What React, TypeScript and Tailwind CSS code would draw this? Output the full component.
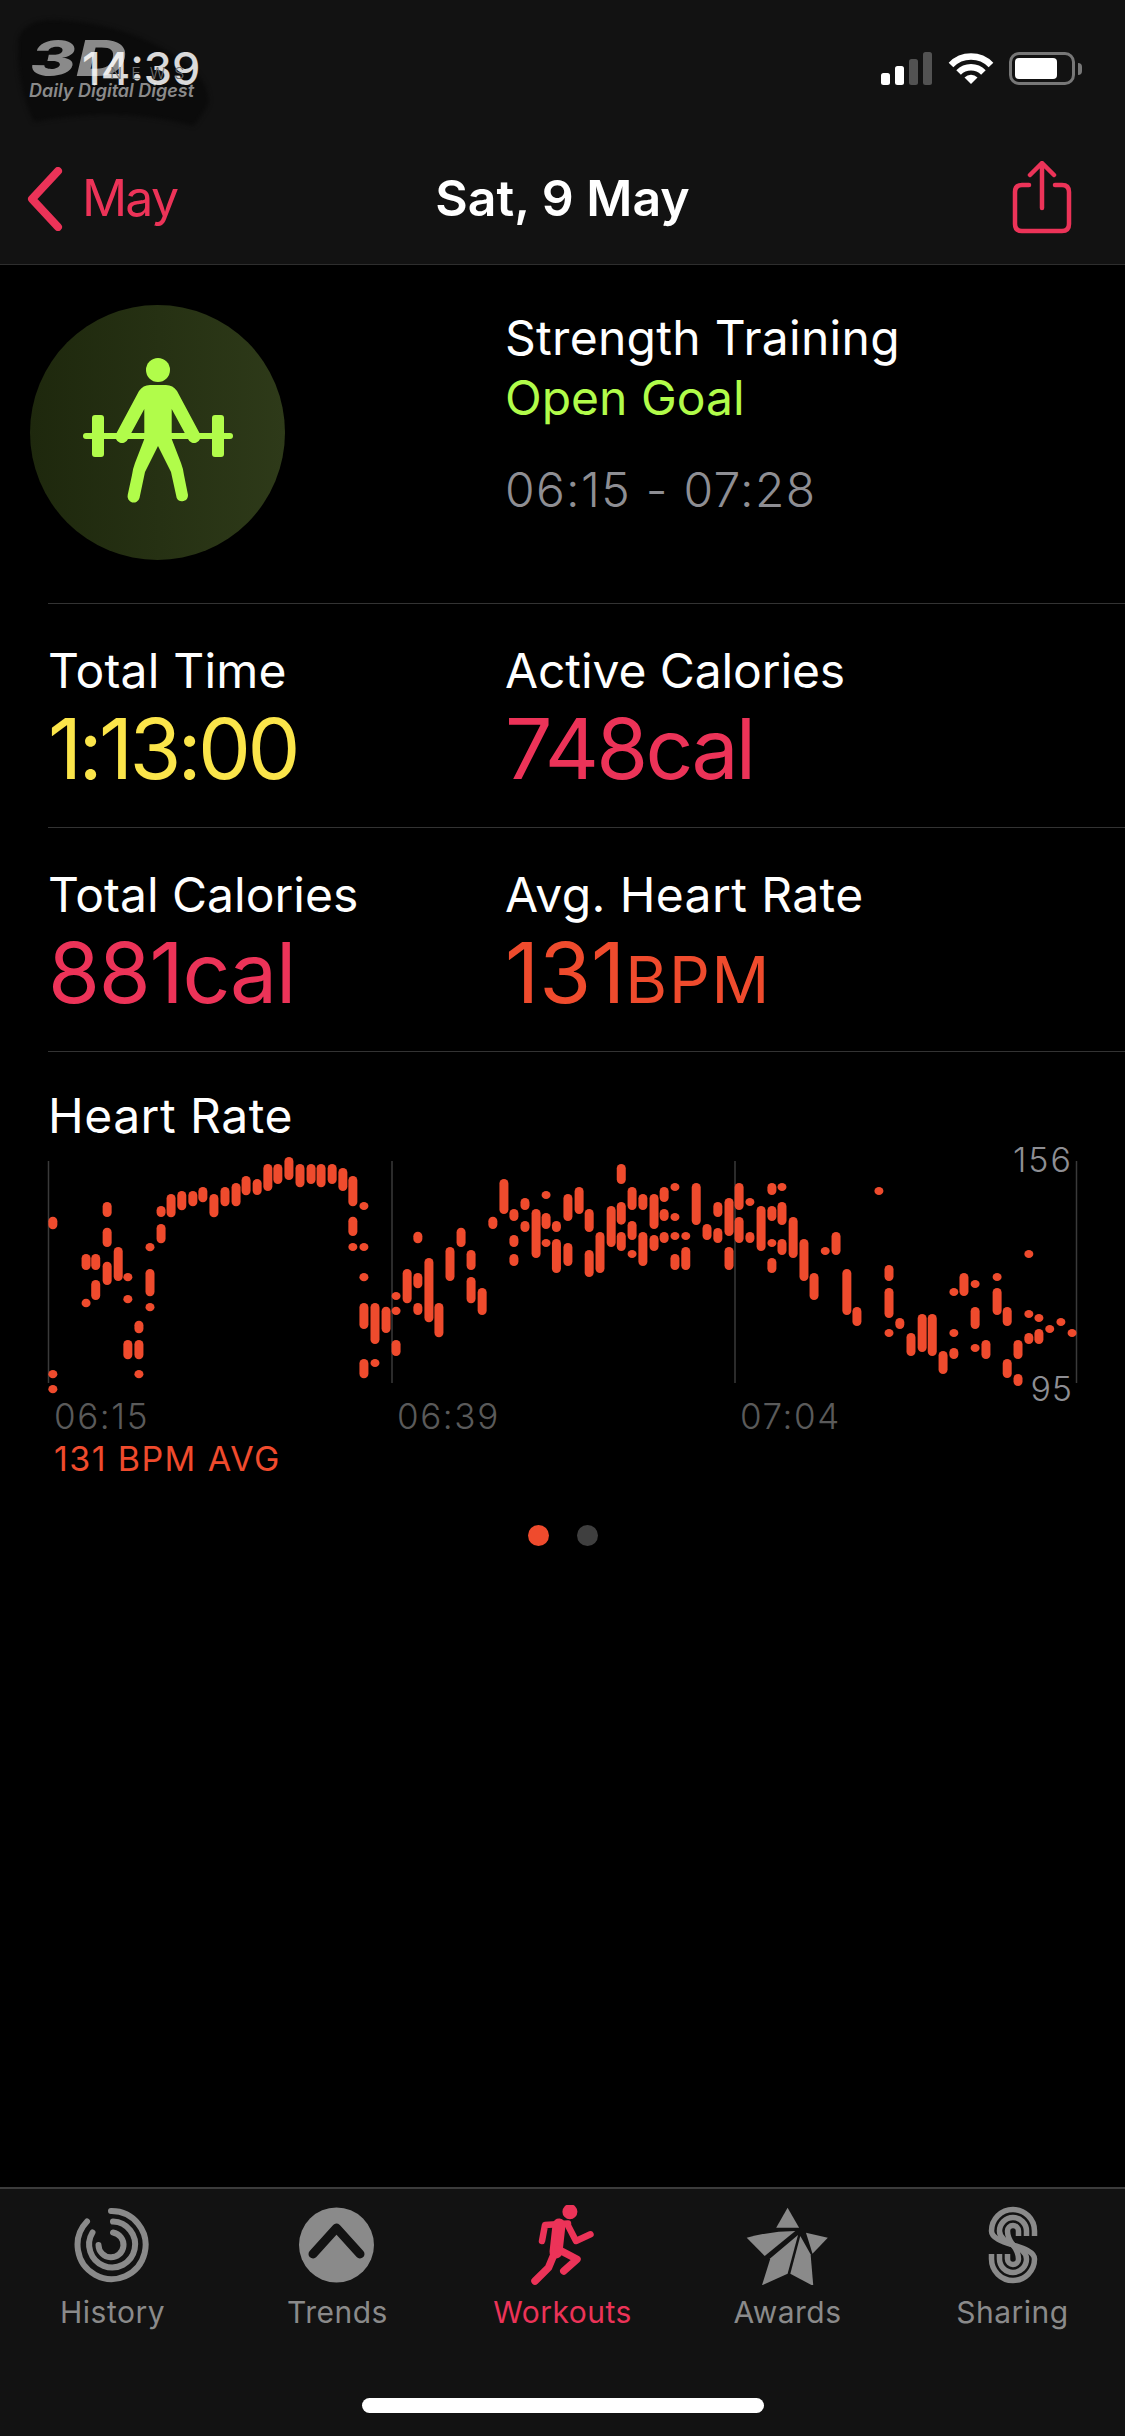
import type { ReactNode } from 'react';

const FONT = "font-['Inter','Liberation_Sans',sans-serif]";

// heart rate samples as [x, top, bottom], read off the two crops of the chart
const LEFT_BARS: number[][] = [
  [148, 410, 448], [148, 870, 895], [148, 915, 940], [241, 522, 570], [241, 656, 682], [268, 522, 570],
  [268, 600, 660], [300, 366, 411], [300, 443, 501], [300, 545, 615], [331, 501, 603], [358, 579, 604],
  [358, 645, 670], [358, 780, 838], [389, 722, 760], [389, 780, 838], [389, 870, 895], [420, 489, 514],
  [420, 567, 649], [420, 669, 694], [451, 378, 411], [451, 432, 490], [479, 342, 412], [509, 333, 391],
  [540, 333, 379], [568, 321, 367], [599, 342, 412], [630, 321, 379], [661, 309, 379], [689, 288, 346],
  [720, 297, 345], [750, 252, 333], [778, 252, 312], [809, 231, 300], [840, 252, 322], [871, 252, 312],
  [899, 252, 322], [930, 252, 312], [960, 264, 333], [988, 288, 379], [1019, 366, 390], [988, 410, 468],
  [988, 489, 513], [1019, 489, 513], [1019, 579, 604], [1019, 669, 747], [1050, 669, 792], [1081, 680, 759],
  [1019, 837, 895], [1050, 837, 861], [1109, 636, 660], [1109, 680, 705], [1109, 780, 828], [1140, 567, 670],
  [1170, 455, 490], [1170, 579, 625], [1170, 669, 705], [1201, 534, 727], [1229, 669, 772], [1260, 501, 603],
  [1291, 443, 501], [1319, 510, 570], [1319, 591, 670], [1350, 624, 705], [1380, 410, 447], [1411, 297, 402],
  [1439, 387, 423], [1439, 465, 501], [1439, 522, 558], [1470, 354, 390], [1470, 423, 456], [1501, 387, 534],
  [1529, 333, 357], [1529, 399, 447], [1529, 477, 501], [1558, 423, 456], [1558, 477, 579],
];

const RIGHT_BARS: number[][] = [
  [22, 342, 423], [22, 489, 558], [53, 321, 402], [81, 387, 456], [81, 510, 591], [111, 456, 579],
  [142, 378, 501], [170, 252, 312], [170, 366, 434], [170, 456, 513], [200, 321, 390], [200, 423, 480],
  [200, 510, 534], [230, 342, 390], [230, 456, 558], [261, 342, 447], [261, 465, 513], [289, 321, 366],
  [289, 387, 423], [289, 456, 489], [319, 309, 333], [319, 399, 423], [319, 456, 480], [319, 522, 570],
  [349, 456, 480], [349, 501, 570], [378, 309, 435], [408, 432, 480], [438, 366, 411], [438, 444, 489],
  [469, 354, 468], [469, 501, 570], [497, 309, 390], [497, 411, 489], [527, 354, 378], [527, 456, 489],
  [558, 378, 513], [588, 309, 345], [588, 378, 423], [588, 477, 501], [588, 534, 579], [616, 309, 333],
  [616, 366, 435], [616, 477, 525], [647, 411, 534], [677, 477, 603], [705, 579, 660], [736, 501, 525],
  [766, 456, 525], [796, 567, 705], [824, 681, 738], [885, 321, 345], [913, 555, 603], [913, 624, 714],
  [913, 747, 771], [943, 714, 747], [974, 759, 828], [1005, 702, 816], [1033, 702, 828], [1063, 813, 882],
  [1093, 624, 648], [1093, 747, 771], [1093, 804, 837], [1121, 579, 648], [1152, 600, 624], [1152, 681, 747],
  [1152, 792, 816], [1182, 780, 837], [1213, 579, 603], [1213, 624, 705], [1241, 681, 738], [1241, 837, 894],
  [1271, 780, 837], [1271, 882, 918], [1301, 510, 534], [1301, 690, 714], [1301, 759, 792], [1329, 702, 726],
  [1329, 747, 792], [1359, 735, 759], [1390, 714, 738], [1421, 747, 771],
];

const CHART_BARS = [
  ...LEFT_BARS.map(([x, a, b]) => [x / 2.8, 1080 + a / 3, 1080 + b / 3]),
  ...RIGHT_BARS.map(([x, a, b]) => [560 + x / 2.775, 1080 + a / 3, 1080 + b / 3]),
];

function StatusIcons() {
  return (
    <div className="relative z-10 flex items-start gap-[15px] pt-[52px] pr-[43px]">
      <svg width="52" height="33" viewBox="0 0 52 33">
        <rect x="0" y="21" width="9" height="12" rx="2.5" fill="#fff" />
        <rect x="14" y="14" width="9" height="19" rx="2.5" fill="#fff" />
        <rect x="28" y="7" width="9" height="26" rx="2.5" fill="#525252" />
        <rect x="42" y="0" width="9" height="33" rx="2.5" fill="#525252" />
      </svg>
      <svg width="46" height="33" viewBox="0 0 46 33" fill="none" stroke="#fff" strokeWidth="6.5">
        <path d="M3 13A28 28 0 0 1 43 13" />
        <path d="M10.6 20.5A17.5 17.5 0 0 1 35.4 20.5" />
        <path d="M23 32L16.5 25.5A9.2 9.2 0 0 1 29.5 25.5Z" fill="#fff" stroke="none" />
      </svg>
      <div className="flex items-center">
        <div className="w-[66px] h-[33px] rounded-[10px] border-[3px] border-[#777] p-[3px]">
          <div className="w-[42px] h-full rounded-[4px] bg-white" />
        </div>
        <div className="ml-[3px] w-[4px] h-[12px] rounded-r-full bg-[#777]" />
      </div>
    </div>
  );
}

// 3D News stamp: brush and big letters go under the clock, NEWS over it
function Watermark() {
  return (
    <>
      <div className="absolute left-0 top-0 w-[230px] h-[140px] pointer-events-none">
        <svg className="absolute left-0 top-0 blur-[2px]" width="230" height="140" viewBox="0 0 230 140">
          <path d="M18 40Q24 18 60 20Q130 24 185 62Q212 85 208 105L194 126Q120 105 34 122Q16 85 18 40Z" fill="#0b0b0b" />
        </svg>
        <div className="absolute left-[30px] top-[28px] text-[50px] leading-[60px] font-extrabold italic text-[#8a8a8a] origin-left scale-x-[1.4]">
          3D
        </div>
        <div className="absolute left-[29px] top-[81px] text-[18px] leading-[20px] font-semibold italic text-[#8a8a8a] whitespace-nowrap">
          Daily Digital Digest
        </div>
      </div>
      <div className="absolute z-20 left-[110px] top-[64px] text-[16px] leading-[18px] font-light tracking-[9px] text-[#6e6e6e] pointer-events-none">
        NEWS
      </div>
    </>
  );
}

function Lifter() {
  return (
    <svg width="255" height="255" viewBox="0 0 255 255" fill="#b1fc4a">
      <circle cx="128" cy="65" r="12" />
      <path d="M120 80H136Q143 80 147 86L170 129A6.500 6.500 0 0 1 158 134L141.700 104V134H114.300V104L98 134A6.500 6.500 0 0 1 86 129L109 86Q113 80 120 80Z" />
      <path d="M114.300 134H141.700L151 158Q153 163 154 170L158 190A6 6 0 0 1 146.700 193L141 167L128 141L115 167L109.500 193A6 6 0 0 1 97.700 190L102 170Q103 163 105 158Z" />
      <rect x="53" y="128" width="150" height="6" rx="3" />
      <rect x="62" y="110" width="12" height="42" rx="3" />
      <rect x="182" y="110" width="12" height="42" rx="3" />
    </svg>
  );
}

function HistoryIcon() {
  return (
    <svg width="90" height="80" viewBox="0 0 90 80" fill="none" stroke="#8a8a8a" strokeWidth="6" strokeLinecap="round">
      <path d="M43 6A34 34 0 1 1 19 16.500" />
      <path d="M45 16.500A23 23 0 1 1 24.500 27.500" />
      <path d="M45 27.500A12.500 12.500 0 1 1 30.500 40" />
    </svg>
  );
}

function TrendsIcon() {
  return (
    <svg width="90" height="80" viewBox="0 0 90 80">
      <circle cx="43.500" cy="40" r="37.500" fill="#8a8a8a" />
      <path d="M20 49L43.500 23L67 49" fill="none" stroke="#121212" strokeWidth="9" strokeLinecap="round" strokeLinejoin="round" />
    </svg>
  );
}

function RunnerIcon() {
  return (
    <svg width="90" height="80" viewBox="0 0 90 80" fill="none" stroke="#ec3358" strokeLinecap="round" strokeLinejoin="round">
      <circle cx="51.900" cy="6.700" r="7.500" fill="#ec3358" stroke="none" />
      <path d="M50 18.500L27 20L24 36" strokeWidth="6.500" />
      <path d="M49.500 19.500L58 36L72.500 29.300" strokeWidth="6.500" />
      <path d="M41 20L38 47" strokeWidth="13" />
      <path d="M40 44.300L59 54.300L45.800 66" strokeWidth="7.500" />
      <path d="M36 49.300L30.500 62.700L17 76" strokeWidth="7.500" />
    </svg>
  );
}

function AwardsIcon() {
  return (
    <svg width="90" height="80" viewBox="0 0 90 80" fill="#8a8a8a">
      <path d="M44.600 2.700L33.200 22.700H56.100Z" />
      <path d="M3.700 32.700Q28 26 52.300 26L21.700 51Z" />
      <path d="M55 30L27.400 53.300L19 80.300L44.600 68.700Z" />
      <path d="M57.300 31L47.300 68.700L70.300 81L67.600 49.300Z" />
      <path d="M63 27.700L84.800 32.700L69.500 48.700Z" />
    </svg>
  );
}

function SharingIcon() {
  const radii = [21.5, 13.5, 5.5];
  return (
    <svg width="90" height="80" viewBox="-45 -40 90 80" fill="none" stroke="#8a8a8a" strokeWidth="5.5">
      {radii.map((r) => (
        <path
          key={r}
          d={`M${r} -9V-14A${r} ${r} 0 0 0 ${-r} -14C${-r} 0 ${r} 0 ${r} 14A${r} ${r} 0 0 1 ${-r} 14V9`}
        />
      ))}
    </svg>
  );
}

function Stat({ label, labelClass, children }: { label: string; labelClass: string; children: ReactNode }) {
  return (
    <div>
      <div className={`text-[48px] leading-[60px] text-white ${labelClass}`}>{label}</div>
      <div className="mt-[3px] text-[84px] leading-[90px]">{children}</div>
    </div>
  );
}

function Tab({ label, active, children }: { label: string; active?: boolean; children: ReactNode }) {
  return (
    <div className="flex flex-col items-center">
      {children}
      <div className={`mt-[9px] text-[30px] leading-[36px] tracking-[0.5px] ${active ? 'text-[#ec3358]' : 'text-[#8a8a8a]'}`}>{label}</div>
    </div>
  );
}

export default function App() {
  return (
    <div className={`${FONT} relative flex flex-col w-[1125px] h-[2436px] bg-black overflow-hidden`}>
      {/* Header */}
      <div className="relative h-[265px] shrink-0 bg-[#121212] border-b border-[#2e2e2e]">
        <Watermark />
        <div className="flex justify-between h-[132px]">
          <div className="relative z-10 pl-[82px] pt-[44px] text-[45px] leading-[50px] font-medium text-white/85">14:39</div>
          <StatusIcons />
        </div>
        <div className="relative z-10 grid grid-cols-[1fr_auto_1fr] items-start">
          <div className="flex items-start pl-[27px]">
            <svg className="mt-[35px]" width="36" height="64" viewBox="0 0 36 64" fill="none" stroke="#ec3358" strokeWidth="8" strokeLinecap="round" strokeLinejoin="round">
              <path d="M31 4L5 32L31 60" />
            </svg>
            <div className="ml-[19px] mt-[36px] text-[50px] leading-[60px] tracking-[-1.8px] text-[#ec3358]">May</div>
          </div>
          <div className="mt-[36px] text-[50px] leading-[60px] font-semibold text-white">Sat, 9 May</div>
          <div className="flex justify-end pr-[53px]">
            <svg className="mt-[29px]" width="60" height="74" viewBox="0 0 60 74" fill="none" stroke="#ec3358" strokeWidth="4.500" strokeLinecap="round" strokeLinejoin="round">
              <path d="M17 24H10Q3 24 3 31V63Q3 70 10 70H50Q57 70 57 63V31Q57 24 50 24H43" />
              <path d="M30 47V3M18 14L30 2L42 14" />
            </svg>
          </div>
        </div>
      </div>

      {/* Workout summary */}
      <div className="flex h-[338px] shrink-0">
        <div className="w-[505px] pl-[30px] pt-[40px]">
          <div className="w-[255px] h-[255px] rounded-full bg-gradient-to-r from-[#1e280d] to-[#2e3a19]">
            <Lifter />
          </div>
        </div>
        <div className="pt-[43px]">
          <div className="text-[48px] leading-[60px] tracking-[0.3px] text-white">Strength Training</div>
          <div className="text-[48px] leading-[60px] text-[#b1fc4a]">Open Goal</div>
          <div className="mt-[32px] text-[48px] leading-[60px] tracking-[1.3px] font-light text-[#8e8e93]">06:15 - 07:28</div>
        </div>
      </div>

      {/* Stats */}
      <div className="ml-[48px] h-[224px] shrink-0 border-t border-[#333] pt-[37px]">
        <div className="grid grid-cols-[457px_1fr]">
          <Stat label="Total Time" labelClass="tracking-[0.2px]">
            <span className="tracking-[-3.7px] text-[#fbe54a]">1:13:00</span>
          </Stat>
          <Stat label="Active Calories" labelClass="tracking-[-0.1px]">
            <span className="tracking-[-2.8px] text-[#ec3358]">748cal</span>
          </Stat>
        </div>
      </div>
      <div className="ml-[48px] h-[224px] shrink-0 border-t border-[#333] pt-[37px]">
        <div className="grid grid-cols-[457px_1fr]">
          <Stat label="Total Calories" labelClass="tracking-[0px]">
            <span className="tracking-[-1.2px] text-[#ec3358]">881cal</span>
          </Stat>
          <Stat label="Avg. Heart Rate" labelClass="tracking-[0.4px]">
            <span className="text-[#ef4b2d]">
              131<span className="text-[64px] tracking-[1.8px]">BPM</span>
            </span>
          </Stat>
        </div>
      </div>

      {/* Heart rate */}
      <div className="ml-[48px] shrink-0 border-t border-[#333] pt-[34px]">
        <div className="text-[48px] leading-[60px] tracking-[0.5px] text-white">Heart Rate</div>
      </div>
      <div className="relative mt-[9px] h-[240px] shrink-0">
        <svg width="1125" height="240" viewBox="0 1155 1125 240">
          {[48.5, 392, 735, 1076.5].map((x) => (
            <rect key={x} x={x - 0.75} y="1161" width="1.5" height="222" fill="#3a3a3a" />
          ))}
          {CHART_BARS.map(([x, a, b], i) => (
            <rect key={i} x={x - 4.5} y={a} width="9" height={b - a} rx="4.5" fill="#ef4b2d" />
          ))}
        </svg>
        <div className="absolute right-[52px] -top-[15px] text-[34px] leading-[40px] tracking-[2px] font-light text-[#8e8e93]">156</div>
        <div className="absolute right-[52px] top-[214px] text-[34px] leading-[40px] tracking-[1px] font-light text-[#8e8e93]">95</div>
      </div>
      <div className="flex mt-[1px] pl-[48px] shrink-0 text-[35px] leading-[40px] tracking-[1.6px] font-light text-[#5a5a5a]">
        <div className="w-[343px] pl-[6px]">06:15</div>
        <div className="w-[343px] pl-[6px]">06:39</div>
        <div className="pl-[6px]">07:04</div>
      </div>
      <div className="pl-[54px] mt-[3px] shrink-0 text-[34px] leading-[40px] tracking-[1.4px] text-[#ef4b2d]">131 BPM AVG</div>
      <div className="flex justify-center gap-[28px] mt-[46px] shrink-0">
        <div className="w-[21px] h-[21px] rounded-full bg-[#ef4b2d]" />
        <div className="w-[21px] h-[21px] rounded-full bg-[#3f3f3f]" />
      </div>

      {/* Tab bar */}
      <div className="mt-auto shrink-0 h-[249px] bg-[#121212] border-t-2 border-[#3c3c3c] pt-[16px]">
        <div className="grid grid-cols-5">
          <Tab label="History">
            <HistoryIcon />
          </Tab>
          <Tab label="Trends">
            <TrendsIcon />
          </Tab>
          <Tab label="Workouts" active>
            <RunnerIcon />
          </Tab>
          <Tab label="Awards">
            <AwardsIcon />
          </Tab>
          <Tab label="Sharing">
            <SharingIcon />
          </Tab>
        </div>
        <div className="mt-[68px] mx-auto w-[402px] h-[15px] rounded-full bg-white" />
      </div>
    </div>
  );
}
